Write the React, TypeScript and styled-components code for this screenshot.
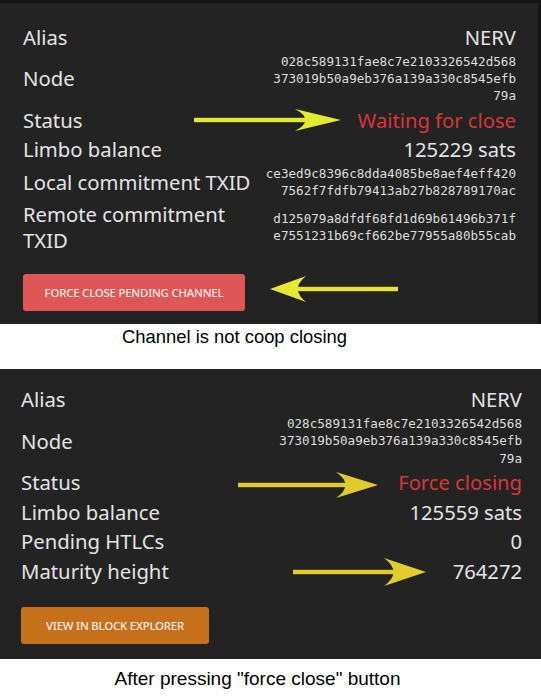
import React from "react";
import styled, { createGlobalStyle } from "styled-components";

const Global = createGlobalStyle`
  html, body { margin: 0; padding: 0; background: #ffffff; }
  body { width: 541px; height: 697px; overflow: hidden; }
`;

const Page = styled.div`
  width: 541px;
  display: flex;
  flex-direction: column;
`;

const Panel = styled.section<{ $top?: boolean }>`
  position: relative;
  background: #232323;
  box-sizing: border-box;
  border-top: ${(p) => (p.$top ? "3px solid #141414" : "none")};
  border-right: ${(p) => (p.$top ? "3px solid #151515" : "none")};
  padding: ${(p) => (p.$top ? "20px 22px 13px 23px" : "16px 19px 15px 21px")};
  display: flex;
  flex-direction: column;
  gap: 1.5px;
  font-family: "Noto Sans", "IBM Plex Sans", sans-serif;
  color: #e4e4e4;
`;

const Row = styled.div`
  display: flex;
  justify-content: space-between;
  align-items: center;
  min-height: 28px;
  gap: 12px;
`;

const Label = styled.div<{ $narrow?: boolean }>`
  font-size: 20.3px;
  line-height: 26px;
  flex: 0 0 auto;
  max-width: ${(p) => (p.$narrow ? "210px" : "none")};
`;

const Value = styled.div<{ $red?: boolean }>`
  font-size: 20.2px;
  line-height: 26px;
  text-align: right;
  color: ${(p) => (p.$red ? "#d93636" : "#e4e4e4")};
`;

const Hash = styled.div`
  font-family: "DejaVu Sans Mono", "Liberation Mono", monospace;
  font-size: 12.6px;
  line-height: 17.3px;
  text-align: right;
  color: #dedede;
`;

const HashLine = styled.span`
  display: block;
  white-space: nowrap;
`;

const Button = styled.button<{ $color: string; $w: number; $mt: number }>`
  align-self: flex-start;
  margin-top: ${(p) => p.$mt}px;
  width: ${(p) => p.$w}px;
  height: 37px;
  border: none;
  border-radius: 3px;
  background: ${(p) => p.$color};
  color: #f7ece8;
  font-family: "Noto Sans", sans-serif;
  font-weight: 500;
  font-size: 11.4px;
  letter-spacing: -0.2px;
  text-transform: uppercase;
  padding: 0;
`;

const Caption = styled.div<{ $h: number; $size: number; $pr: number; $pb: number }>`
  height: ${(p) => p.$h}px;
  display: flex;
  align-items: center;
  justify-content: center;
  font-family: "Liberation Sans", Arial, sans-serif;
  font-size: ${(p) => p.$size}px;
  color: #000;
  padding-right: ${(p) => p.$pr}px;
  padding-bottom: ${(p) => p.$pb}px;
  box-sizing: border-box;
`;

const ArrowSvg = styled.svg`
  position: absolute;
  overflow: visible;
  pointer-events: none;
`;

type ArrowProps = {
  x1: number;
  x2: number;
  y: number;
  head: number;
  half: number;
  color: string;
};

function Arrow({ x1, x2, y, head, half, color }: ArrowProps) {
  const left = Math.min(x1, x2);
  const len = Math.abs(x2 - x1);
  const dir = x2 > x1 ? 1 : -1;
  const base = len - head;
  const d = `M ${len} ${half} L ${base} 0 Q ${base + head * 0.45} ${half} ${base} ${half * 2} Z`;
  return (
    <ArrowSvg
      width={len}
      height={half * 2}
      style={{ left, top: y - half }}
      viewBox={`0 0 ${len} ${half * 2}`}
    >
      <g transform={dir < 0 ? `translate(${len} 0) scale(-1 1)` : undefined}>
        <rect x={0} y={half - 2.2} width={base + head * 0.4} height={4.4} fill={color} />
        <path d={d} fill={color} />
      </g>
    </ArrowSvg>
  );
}

export default function App() {
  return (
    <Page>
      <Global />
      <Panel $top>
        <Row>
          <Label>Alias</Label>
          <Value>NERV</Value>
        </Row>
        <Row>
          <Label>Node</Label>
          <Hash>
            <HashLine>028c589131fae8c7e2103326542d568</HashLine>
            <HashLine>373019b50a9eb376a139a330c8545efb</HashLine>
            <HashLine>79a</HashLine>
          </Hash>
        </Row>
        <Row>
          <Label>Status</Label>
          <Value $red>Waiting for close</Value>
        </Row>
        <Row>
          <Label>Limbo balance</Label>
          <Value>125229 sats</Value>
        </Row>
        <Row>
          <Label>Local commitment TXID</Label>
          <Hash>
            <HashLine>ce3ed9c8396c8dda4085be8aef4eff420</HashLine>
            <HashLine>7562f7fdfb79413ab27b828789170ac</HashLine>
          </Hash>
        </Row>
        <Row>
          <Label $narrow>Remote commitment TXID</Label>
          <Hash>
            <HashLine>d125079a8dfdf68fd1d69b61496b371f</HashLine>
            <HashLine>e7551231b69cf662be77955a80b55cab</HashLine>
          </Hash>
        </Row>
        <Button $color="#df5656" $w={222} $mt={20}>Force close pending channel</Button>
        <Arrow x1={194} x2={341} y={117} head={46} half={11} color="#e3e834" />
        <Arrow x1={398} x2={270} y={286} head={36} half={13} color="#e6e635" />
      </Panel>
      <Caption $h={45} $size={18.4} $pr={72} $pb={20}>Channel is not coop closing</Caption>
      <Panel>
        <Row>
          <Label>Alias</Label>
          <Value>NERV</Value>
        </Row>
        <Row>
          <Label>Node</Label>
          <Hash>
            <HashLine>028c589131fae8c7e2103326542d568</HashLine>
            <HashLine>373019b50a9eb376a139a330c8545efb</HashLine>
            <HashLine>79a</HashLine>
          </Hash>
        </Row>
        <Row>
          <Label>Status</Label>
          <Value $red>Force closing</Value>
        </Row>
        <Row>
          <Label>Limbo balance</Label>
          <Value>125559 sats</Value>
        </Row>
        <Row>
          <Label>Pending HTLCs</Label>
          <Value>0</Value>
        </Row>
        <Row>
          <Label>Maturity height</Label>
          <Value>764272</Value>
        </Row>
        <Button $color="#c6701c" $w={188} $mt={21}>View in block explorer</Button>
        <Arrow x1={238} x2={378} y={116} head={42} half={13} color="#e0cb2e" />
        <Arrow x1={293} x2={426} y={203} head={42} half={14} color="#e2cd2f" />
      </Panel>
      <Caption $h={40} $size={19} $pr={26} $pb={0}>After pressing "force close" button</Caption>
    </Page>
  );
}
